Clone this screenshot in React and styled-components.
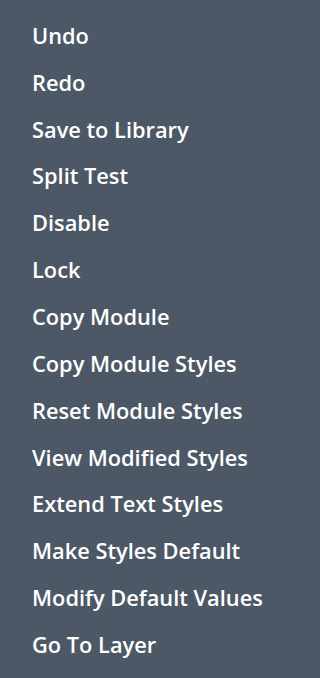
import React from "react";
import styled, { createGlobalStyle } from "styled-components";

const GlobalStyle = createGlobalStyle`
  html, body { margin: 0; padding: 0; background: #4c5866; }
  body { font-family: "Open Sans", "Liberation Sans", sans-serif; }
`;

const items = [
  "Undo",
  "Redo",
  "Save to Library",
  "Split Test",
  "Disable",
  "Lock",
  "Copy Module",
  "Copy Module Styles",
  "Reset Module Styles",
  "View Modified Styles",
  "Extend Text Styles",
  "Make Styles Default",
  "Modify Default Values",
  "Go To Layer",
];

export default function App() {
  return (
    <>
      <GlobalStyle />
      <Menu>
        {items.map((label) => (
          <Item key={label}>{label}</Item>
        ))}
      </Menu>
    </>
  );
}

const Menu = styled.ul`
  list-style: none;
  margin: 0;
  padding: 12px 0 0 0;
  width: 294px;
  height: 678px;
  box-sizing: border-box;
  background: #4c5866;
  border-radius: 3px;
`;

const Item = styled.li`
  height: 46.85px;
  display: flex;
  align-items: center;
  padding-left: 32px;
  color: #ffffff;
  font-size: 21.8px;
  font-weight: 600;
  letter-spacing: 0;
  white-space: nowrap;
`;
